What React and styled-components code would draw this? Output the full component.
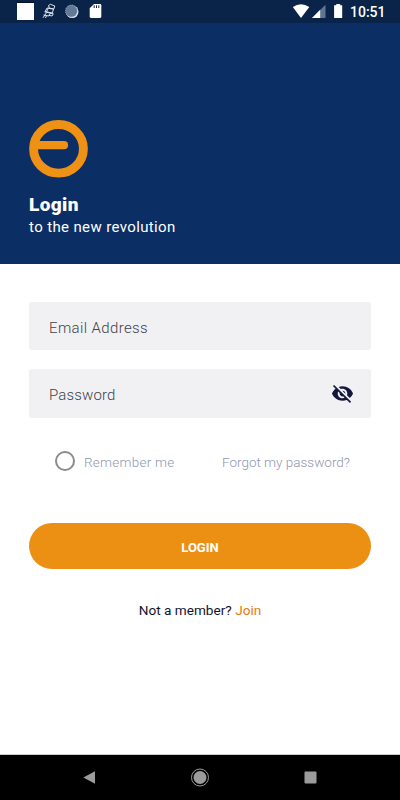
import { useState } from 'react';
import styled, { createGlobalStyle } from 'styled-components';

const LoginPage = () => {
  const [remember, setRemember] = useState(false);

  return (
    <Screen>
      <GlobalStyle />
      {/* Status Bar */}
      <StatusBar>
        <StatusIcons />
        <Clock>10:51</Clock>
      </StatusBar>

      {/* Header */}
      <Header>
        <Logo />
        <Title>Login</Title>
        <Subtitle>to the new revolution</Subtitle>
      </Header>

      {/* Form */}
      <Form onSubmit={(e) => e.preventDefault()}>
        <Field>
          <Input type='text' placeholder='Email Address' $spacing='0.37px' $top='3px' />
        </Field>
        <Field>
          <Input type='password' placeholder='Password' $spacing='0.15px' $top='2px' />
          <HiddenIcon />
        </Field>
        <Options>
          <Remember type='button' onClick={() => setRemember(!remember)}>
            <Radio $checked={remember} />
            <span>Remember me</span>
          </Remember>
          <Forgot>Forgot my password?</Forgot>
        </Options>
        <LoginButton>LOGIN</LoginButton>
        <Join>
          Not a member? <span>Join</span>
        </Join>
      </Form>

      {/* Navigation */}
      <NavBar>
        <NavIcon viewBox='0 0 20 20'>
          <path d='M3.3 9.5 15 3.2 V15.8Z' />
        </NavIcon>
        <NavIcon viewBox='0 0 20 20'>
          <circle cx='10' cy='9.5' r='8.5' fill='none' stroke='#9b9b9b' strokeWidth='1' />
          <circle cx='10' cy='9.5' r='6.5' />
        </NavIcon>
        <NavIcon viewBox='0 0 20 20'>
          <rect x='4.5' y='3.5' width='12' height='12' rx='1' />
        </NavIcon>
      </NavBar>
    </Screen>
  );
};
export default LoginPage;

const StatusIcons = () => (
  <StatusSvg viewBox='0 0 346 23'>
    <path d='M17 3H34V20H17Z' fill='#fff' />
    <path d='M17 2.4H34' stroke='#071225' strokeWidth='1.2' />
    <g fill='none' stroke='#dce4f0' strokeWidth='1'>
      <path d='M48.5 5.5 50.5 4.3 54.8 6 53.8 9 49.2 8Z' />
      <path d='M47 8 53.6 9.2 52.2 13 45.2 11.5Z M44.5 11.8 50.5 13.2 48.8 16 43.5 15 M43 17.8 46.5 12.6 M46.5 16 45.4 18 M50 13 53.3 13.8 52 16 48.7 15.3 M48.3 8.3 46.6 11.6' />
    </g>
    <circle cx='72.2' cy='11.8' r='6.3' fill='#e4e8ef' />
    <circle cx='71.4' cy='11' r='5.9' fill='#637796' />
    <circle cx='71.4' cy='11' r='5.9' fill='none' stroke='#a8b4c6' strokeWidth='1' strokeDasharray='1 1' />
    <path d='M94 4H100Q101.3 4 101.3 5.2V16.6Q101.3 18 100 18H91Q89.7 18 89.7 16.6V8.3Z' fill='#fff' />
    <path d='M94.2 5.3V8M96.5 5.3V8M98.8 5.3V8' stroke='#092448' strokeWidth='1' />
    <path d='M292.8 7.1Q301 1.2 309.3 7.1L301 17.9Z' fill='#fff' />
    <path d='M312 18 325.5 4.8V18Z' fill='#617492' />
    <path d='M312 18 320.2 9.8V18Z' fill='#fff' />
    <path d='M336.3 4H340.2V5.3H342.2V18H334.1V5.3H336.3Z' fill='#fff' />
  </StatusSvg>
);

const Logo = () => (
  <LogoSvg viewBox='0 0 60 58' fill='none' stroke='#ee9114' strokeWidth='8.9'>
    <ellipse cx='29.5' cy='28.8' rx='24.9' ry='24.3' />
    <path d='M5 25.2H35' strokeWidth='8.2' strokeLinecap='round' />
  </LogoSvg>
);

const HiddenIcon = () => (
  <EyeSvg viewBox='0 0 24 24'>
    <path d='M12 7c2.76 0 5 2.24 5 5 0 .65-.13 1.26-.36 1.83l2.92 2.92c1.51-1.26 2.7-2.89 3.43-4.75-1.73-4.39-6-7.5-11-7.5-1.4 0-2.74.25-3.98.7l2.16 2.16C10.74 7.13 11.35 7 12 7zM2 4.27l2.28 2.28.46.46C3.08 8.3 1.78 10.02 1 12c1.73 4.39 6 7.5 11 7.5 1.55 0 3.03-.3 4.38-.84l.42.42L19.73 22 21 20.73 3.27 3 2 4.27zM7.53 9.8l1.55 1.55c-.05.21-.08.43-.08.65 0 1.66 1.34 3 3 3 .22 0 .44-.03.65-.08l1.55 1.55c-.67.33-1.41.53-2.2.53-2.76 0-5-2.24-5-5 0-.79.2-1.53.53-2.2zm4.31-.78l3.15 3.15.02-.16c0-1.66-1.34-3-3-3l-.17.01z' />
  </EyeSvg>
);

const GlobalStyle = createGlobalStyle`
  * { box-sizing: border-box; }
  body { margin: 0; }
  button, input { font-family: inherit; border: 0; padding: 0; }
`;

const Screen = styled.main`
  display: flex;
  flex-direction: column;
  width: 400px;
  height: 800px;
  overflow: hidden;
  background: #fff;
  font-family: Roboto, sans-serif;
`;

const StatusBar = styled.div`
  display: flex;
  align-items: center;
  height: 23px;
  background: #092448;
  color: #fff;
`;

const StatusSvg = styled.svg`
  width: 346px;
  height: 23px;
`;

const Clock = styled.span`
  margin-left: 4px;
  font-size: 14px;
  font-weight: 500;
  line-height: 23px;
  padding-top: 1px;
`;

const Header = styled.header`
  height: 241px;
  padding: 97px 29px 0;
  background: #0b2e65;
  color: #fff;
`;

const LogoSvg = styled.svg`
  display: block;
  width: 60px;
  height: 58px;
`;

const Title = styled.h1`
  margin: 15px 0 0;
  font-size: 19px;
  font-weight: 900;
  line-height: 24px;
  letter-spacing: 0.4px;
`;

const Subtitle = styled.p`
  margin: 0;
  font-size: 15px;
  font-weight: 400;
  line-height: 20px;
  letter-spacing: 0.37px;
`;

const Form = styled.form`
  display: flex;
  flex-direction: column;
  flex: 1;
  padding: 38.3px 29px 0;
`;

const Field = styled.div`
  display: flex;
  align-items: center;
  height: 48.2px;
  margin-bottom: 19px;
  padding: 0 17px 0 20px;
  border-radius: 3px;
  background: #f1f1f4;
`;

const Input = styled.input`
  flex: 1;
  min-width: 0;
  height: 100%;
  padding-top: ${({ $top }) => $top};
  background: transparent;
  outline: 0;
  font-size: 15px;
  font-weight: 300;
  letter-spacing: ${({ $spacing }) => $spacing};

  &::placeholder {
    color: #424248;
  }
`;

const EyeSvg = styled.svg`
  width: 23px;
  height: 23px;
  fill: #13173c;
`;

const Options = styled.div`
  display: flex;
  align-items: center;
  justify-content: space-between;
  height: 24px;
  margin-top: 12px;
  padding: 0 21px 0 26px;
  color: #9197b0;
  font-size: 13.5px;
  font-weight: 300;
`;

const Remember = styled.button`
  display: flex;
  align-items: center;
  gap: 9px;
  background: none;
  color: inherit;
  font-size: inherit;
  font-weight: inherit;
  letter-spacing: 0.25px;

  span:last-child {
    padding-top: 2px;
  }
`;

const Radio = styled.span`
  width: 20px;
  height: 20px;
  border: 2px solid #8c8c8c;
  border-radius: 50%;
  background: ${({ $checked }) => ($checked ? '#ee9114' : 'transparent')};
`;

const Forgot = styled.span`
  padding-top: 2px;
  letter-spacing: 0;
`;

const LoginButton = styled.button`
  height: 45.5px;
  margin-top: 50.8px;
  padding-top: 2px;
  border-radius: 23px;
  background: #ec9014;
  color: #fff;
  font-size: 13px;
  font-weight: 700;
`;

const Join = styled.p`
  margin: 31px 0 0;
  color: #13152e;
  font-size: 13.6px;
  line-height: 20px;
  text-align: center;
  white-space: pre;

  span {
    color: #e8790c;
  }
`;

const NavBar = styled.nav`
  display: flex;
  align-items: center;
  justify-content: space-between;
  height: 46px;
  padding: 0 80px;
  border-top: 1px solid #ccc;
  background: #000;
`;

const NavIcon = styled.svg`
  width: 20px;
  height: 20px;
  fill: #9b9b9b;
`;
